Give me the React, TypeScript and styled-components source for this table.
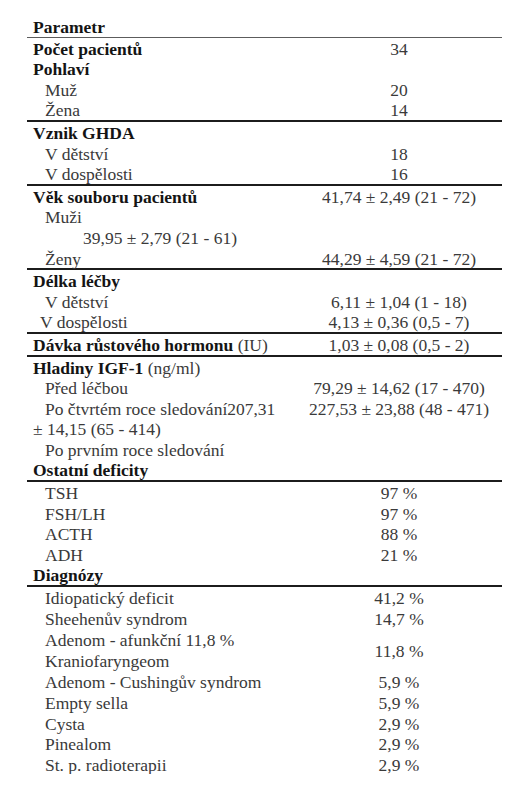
import React from 'react';
import styled, {createGlobalStyle} from 'styled-components';

const GlobalStyle = createGlobalStyle`
  body {
    margin: 0;
    background: #fff;
  }
`;

const Page = styled.div`
  width: 475px;
  padding: 16px 27px 0;
  font-family: "Liberation Serif", "Times New Roman", serif;
  font-size: 17.5px;
  color: #3a3a3a;
`;

type Line = 'thin' | 'thick' | 'none';

const Section = styled.div<{$line: Line}>`
  border-bottom: ${p =>
    p.$line === 'thick' ? '2px solid #1c1c1c' : p.$line === 'thin' ? '1.5px solid #5c5c5c' : 'none'};
`;

// text sits low in each row, close to the rule below it
const Row = styled.div`
  display: grid;
  grid-template-columns: 269px 1fr;
  align-items: center;
  padding-top: 2px;
  line-height: 18.6px;
`;

const Label = styled.div<{$indent: number; $multi: boolean}>`
  padding-left: ${p => 6 + p.$indent}px;
  white-space: pre-line;
  line-height: ${p => (p.$multi ? '20.6px' : 'inherit')};
`;

const Strong = styled.b`
  color: #141414;
  font-weight: bold;
`;

const Value = styled.div`
  text-align: center;
`;

type Item = {
  label: string;
  value?: string;
  bold?: boolean;
  unit?: string;
  indent?: number;
};

const sections: {line: Line; rows: Item[]}[] = [
  {line: 'thin', rows: [{label: 'Parametr', bold: true}]},
  {
    line: 'thick',
    rows: [
      {label: 'Počet pacientů', bold: true, value: '34'},
      {label: 'Pohlaví', bold: true},
      {label: 'Muž', indent: 12, value: '20'},
      {label: 'Žena', indent: 12, value: '14'},
    ],
  },
  {
    line: 'thick',
    rows: [
      {label: 'Vznik GHDA', bold: true},
      {label: 'V dětství', indent: 12, value: '18'},
      {label: 'V dospělosti', indent: 12, value: '16'},
    ],
  },
  {
    line: 'thick',
    rows: [
      {label: 'Věk souboru pacientů', bold: true, value: '41,74 ± 2,49 (21 - 72)'},
      {label: 'Muži', indent: 12},
      {label: '39,95 ± 2,79 (21 - 61)', indent: 50},
      {label: 'Ženy', indent: 12, value: '44,29 ± 4,59 (21 - 72)'},
    ],
  },
  {
    line: 'thick',
    rows: [
      {label: 'Délka léčby', bold: true},
      {label: 'V dětství', indent: 12, value: '6,11 ± 1,04 (1 - 18)'},
      {label: 'V dospělosti', indent: 7, value: '4,13 ± 0,36 (0,5 - 7)'},
    ],
  },
  {
    line: 'thick',
    rows: [{label: 'Dávka růstového hormonu', unit: ' (IU)', bold: true, value: '1,03 ± 0,08 (0,5 - 2)'}],
  },
  {
    line: 'thick',
    rows: [
      {label: 'Hladiny IGF-1', unit: ' (ng/ml)', bold: true},
      {label: 'Před léčbou', indent: 12, value: '79,29 ± 14,62 (17 - 470)'},
      {label: 'Po čtvrtém roce sledování207,31', indent: 12, value: '227,53 ± 23,88 (48 - 471)'},
      {label: '± 14,15 (65 - 414)'},
      {label: 'Po prvním roce sledování', indent: 12},
      {label: 'Ostatní deficity', bold: true},
    ],
  },
  {
    line: 'thick',
    rows: [
      {label: 'TSH', indent: 12, value: '97 %'},
      {label: 'FSH/LH', indent: 12, value: '97 %'},
      {label: 'ACTH', indent: 12, value: '88 %'},
      {label: 'ADH', indent: 12, value: '21 %'},
      {label: 'Diagnózy', bold: true},
    ],
  },
  {
    line: 'none',
    rows: [
      {label: 'Idiopatický deficit', indent: 12, value: '41,2 %'},
      {label: 'Sheehenův syndrom', indent: 12, value: '14,7 %'},
      {label: 'Adenom - afunkční 11,8 %\nKraniofaryngeom', indent: 12, value: '11,8 %'},
      {label: 'Adenom - Cushingův syndrom', indent: 12, value: '5,9 %'},
      {label: 'Empty sella', indent: 12, value: '5,9 %'},
      {label: 'Cysta', indent: 12, value: '2,9 %'},
      {label: 'Pinealom', indent: 12, value: '2,9 %'},
      {label: 'St. p. radioterapii', indent: 12, value: '2,9 %'},
    ],
  },
];

export default function App() {
  return (
    <Page>
      <GlobalStyle />
      {sections.map((s, i) => (
        <Section key={i} $line={s.line}>
          {s.rows.map((r, j) => (
            <Row key={j}>
              <Label $indent={r.indent ?? 0} $multi={r.label.includes('\n')}>
                {r.bold ? <Strong>{r.label}</Strong> : r.label}
                {r.unit}
              </Label>
              <Value>{r.value}</Value>
            </Row>
          ))}
        </Section>
      ))}
    </Page>
  );
}
